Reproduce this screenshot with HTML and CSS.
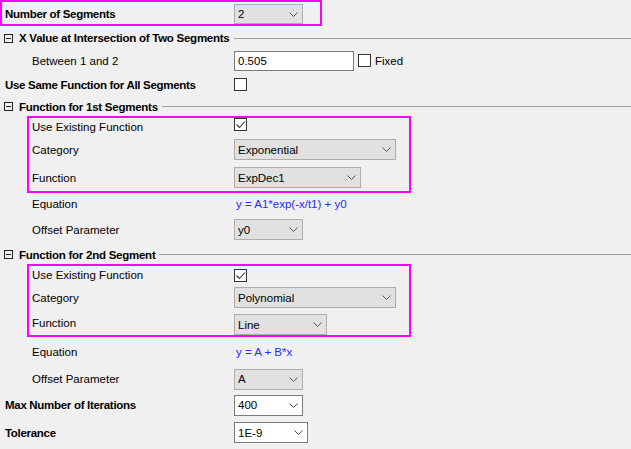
FILE: index.html
```html
<!DOCTYPE html>
<html>
<head>
<meta charset="utf-8">
<link rel="stylesheet" href="styles.css">
</head>
<body>
<div class="panel">
  <div class="hl hl-top">
    <div class="row r-top">
      <span class="lbl lb0 bold">Number of Segments</span>
      <div class="dd w69 h20"><span>2</span><svg class="chev" width="9" height="5" viewBox="0 0 9 5"><polyline points="0.5,0.5 4.5,4.5 8.5,0.5"/></svg></div>
    </div>
  </div>

  <div class="ghead h24">
    <span class="tog"></span><span class="gt">X Value at Intersection of Two Segments</span><span class="gl"></span>
  </div>
  <div class="row h22">
    <span class="lbl l1">Between 1 and 2</span>
    <div class="inp">0.505</div>
    <span class="cb cb-fixed"></span><span class="cbl">Fixed</span>
  </div>
  <div class="row h25">
    <span class="lbl l0 bold">Use Same Function for All Segments</span>
    <span class="cb"></span>
  </div>

  <div class="ghead h19">
    <span class="tog"></span><span class="gt">Function for 1st Segments</span><span class="gl"></span>
  </div>
  <div class="hl hl-sub">
    <div class="row h17">
      <span class="lbl l1b">Use Existing Function</span>
      <span class="cb top"><svg width="11" height="11" viewBox="0 0 11 11"><polyline points="1.5,5.5 4.5,8.5 10,2.5"/></svg></span>
    </div>
    <div class="row h29">
      <span class="lbl l1b">Category</span>
      <div class="dd w162"><span>Exponential</span><svg class="chev" width="9" height="5" viewBox="0 0 9 5"><polyline points="0.5,0.5 4.5,4.5 8.5,0.5"/></svg></div>
    </div>
    <div class="row h27">
      <span class="lbl l1b">Function</span>
      <div class="dd w127"><span>ExpDec1</span><svg class="chev" width="9" height="5" viewBox="0 0 9 5"><polyline points="0.5,0.5 4.5,4.5 8.5,0.5"/></svg></div>
    </div>
  </div>
  <div class="row h21">
    <span class="lbl l1">Equation</span>
    <span class="eq">y = A1*exp(-x/t1) + y0</span>
  </div>
  <div class="row h31">
    <span class="lbl l1">Offset Parameter</span>
    <div class="dd w69"><span>y0</span><svg class="chev" width="9" height="5" viewBox="0 0 9 5"><polyline points="0.5,0.5 4.5,4.5 8.5,0.5"/></svg></div>
  </div>

  <div class="ghead h19">
    <span class="tog"></span><span class="gt">Function for 2nd Segment</span><span class="gl"></span>
  </div>
  <div class="hl hl-sub">
    <div class="row h18">
      <span class="lbl l1b">Use Existing Function</span>
      <span class="cb"><svg width="11" height="11" viewBox="0 0 11 11"><polyline points="1.5,5.5 4.5,8.5 10,2.5"/></svg></span>
    </div>
    <div class="row h27">
      <span class="lbl l1b">Category</span>
      <div class="dd w162"><span>Polynomial</span><svg class="chev" width="9" height="5" viewBox="0 0 9 5"><polyline points="0.5,0.5 4.5,4.5 8.5,0.5"/></svg></div>
    </div>
    <div class="row h24 end">
      <span class="lbl l1b">Function</span>
      <div class="dd w93"><span>Line</span><svg class="chev" width="9" height="5" viewBox="0 0 9 5"><polyline points="0.5,0.5 4.5,4.5 8.5,0.5"/></svg></div>
    </div>
  </div>
  <div class="row h29">
    <span class="lbl l1">Equation</span>
    <span class="eq">y = A + B*x</span>
  </div>
  <div class="row h26">
    <span class="lbl l1">Offset Parameter</span>
    <div class="dd w69"><span>A</span><svg class="chev" width="9" height="5" viewBox="0 0 9 5"><polyline points="0.5,0.5 4.5,4.5 8.5,0.5"/></svg></div>
  </div>
  <div class="row h26">
    <span class="lbl l0 bold">Max Number of Iterations</span>
    <div class="dd white w69"><span>400</span><svg class="chev" width="9" height="5" viewBox="0 0 9 5"><polyline points="0.5,0.5 4.5,4.5 8.5,0.5"/></svg></div>
  </div>
  <div class="row h29">
    <span class="lbl l0 bold">Tolerance</span>
    <div class="dd white w74"><span>1E-9</span><svg class="chev" width="9" height="5" viewBox="0 0 9 5"><polyline points="0.5,0.5 4.5,4.5 8.5,0.5"/></svg></div>
  </div>
</div>
</body>
</html>
```

FILE: styles.css
```css
html, body {
  margin: 0;
  padding: 0;
}
body {
  background: #f0f0f0;
  font-family: "Liberation Sans", Arial, sans-serif;
  font-size: 11.5px;
  color: #000;
}
.panel {
  width: 631px;
  height: 449px;
  overflow: hidden;
}
.bold {
  font-weight: bold;
  letter-spacing: -0.3px;
}

.hl {
  border: 2px solid #ff00ff;
  box-sizing: border-box;
}
.hl-top {
  width: 322px;
  height: 26px;
}
.hl-sub {
  margin-left: 27px;
  width: 384px;
}

.row {
  display: flex;
  align-items: center;
  box-sizing: border-box;
}
.row.end { align-items: flex-end; }
.r-top { height: 22px; padding-top: 2px; }
.h17 { height: 17px; }
.h18 { height: 18px; }
.h19 { height: 19px; }
.h21 { height: 21px; }
.h22 { height: 22px; }
.h24 { height: 24px; }
.h25 { height: 25px; }
.h26 { height: 26px; }
.h27 { height: 27px; }
.h29 { height: 29px; }
.h31 { height: 31px; }

.lbl {
  flex: none;
  box-sizing: border-box;
  white-space: nowrap;
}
.row.end .lbl { align-self: center; }
.lb0 { width: 232px; padding-left: 3px; }
.l0 { width: 234px; padding-left: 5px; }
.l1 { width: 234px; padding-left: 32px; }
.l1b { width: 205px; padding-left: 3px; }

.ghead {
  display: flex;
  align-items: center;
  padding-left: 4px;
}
.tog {
  flex: none;
  width: 9px;
  height: 9px;
  box-sizing: border-box;
  border: 1px solid #222;
  position: relative;
  margin-right: 6px;
}
.tog::after {
  content: "";
  position: absolute;
  left: 1px;
  right: 1px;
  top: 3px;
  height: 1px;
  background: #222;
}
.gt {
  font-weight: bold;
  letter-spacing: -0.25px;
  white-space: nowrap;
}
.gl {
  flex: 1;
  height: 1px;
  background: #a0a0a0;
  margin-left: 4px;
}

.dd {
  flex: none;
  display: flex;
  align-items: center;
  justify-content: space-between;
  height: 21px;
  box-sizing: border-box;
  border: 1px solid #adadad;
  background: #e1e1e1;
  padding: 0 4px 0 3px;
}
.dd.white {
  background: #fff;
  border-color: #7a7a7a;
}
.dd.h20 { height: 20px; }
.w69 { width: 69px; }
.w74 { width: 74px; }
.w93 { width: 93px; }
.w127 { width: 127px; }
.w162 { width: 162px; }
.chev polyline {
  fill: none;
  stroke: #555;
  stroke-width: 1;
}

.inp {
  flex: none;
  width: 120px;
  height: 20px;
  box-sizing: border-box;
  border: 1px solid #7a7a7a;
  background: #fff;
  padding-left: 3px;
  display: flex;
  align-items: center;
}

.cb {
  flex: none;
  width: 13px;
  height: 13px;
  box-sizing: border-box;
  border: 1px solid #333;
  background: #fff;
  display: flex;
  align-items: center;
  justify-content: center;
}
.cb.top { align-self: flex-start; }
.cb svg polyline {
  fill: none;
  stroke: #333;
  stroke-width: 1.1;
}
.cb-fixed {
  margin-left: 4px;
  margin-top: -2px;
}
.cbl {
  margin-left: 4px;
}

.eq {
  color: #2a2aff;
  padding-left: 2px;
  white-space: nowrap;
}
```
